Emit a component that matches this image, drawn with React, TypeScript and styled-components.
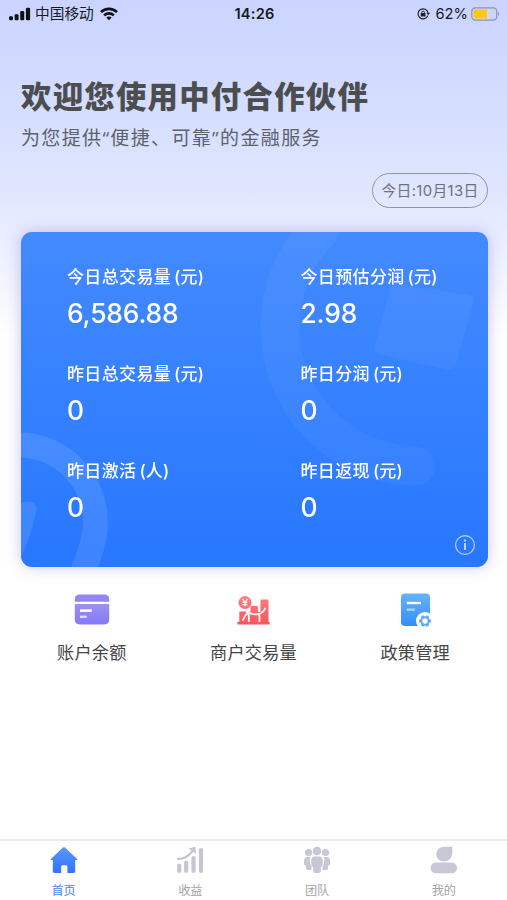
import React from 'react';
import styled, { createGlobalStyle } from 'styled-components';

const GlobalStyle = createGlobalStyle`
  * { box-sizing: border-box; }
  body { margin: 0; background: #fff; }
`;

const Screen = styled.div`
  width: 507px;
  height: 900px;
  display: flex;
  flex-direction: column;
  overflow: hidden;
  font-family: Inter, 'Noto Sans CJK SC', sans-serif;
  color: #4a4a4a;
  background: linear-gradient(180deg, #cad4ff 0, #d5deff 110px, #e0e6ff 190px, #eef1ff 260px, #fff 335px);
`;

const StatusBar = styled.header`
  height: 28px;
  display: grid;
  grid-template-columns: 1fr auto 1fr;
  align-items: center;
  padding: 0 7px 0 9px;
  color: #17191f;
  font-size: 15px;
  line-height: 28px;
`;

const StatusGroup = styled.div<{ $end?: boolean }>`
  display: flex;
  align-items: center;
  justify-content: ${(p) => (p.$end ? 'flex-end' : 'flex-start')};
`;

const Carrier = styled.span`
  margin: 0 6px 0 4px;
  font-size: 14.7px;
`;

const Clock = styled.time`
  font-weight: 600;
  font-size: 14.6px;
  letter-spacing: 0.2px;
`;

const Percent = styled.span`
  margin: 0 3px 0 6px;
  font-size: 14.7px;
`;

const Intro = styled.section`
  display: flex;
  flex-direction: column;
  padding: 46px 19px 0 21px;
`;

const Title = styled.h1`
  margin: 0;
  padding-top: 1px;
  font-size: 30.4px;
  line-height: 44px;
  letter-spacing: 1.25px;
  font-weight: 900;
  color: #4b4d4f;
  white-space: nowrap;
`;

const Subtitle = styled.p`
  margin: 5px 0 0;
  font-family: 'Open Sans', 'Noto Sans CJK SC', sans-serif;
  font-size: 19px;
  line-height: 28px;
  letter-spacing: 1.35px;
  color: #5d616c;
  white-space: nowrap;
`;

const DatePill = styled.div`
  align-self: flex-end;
  width: 116px;
  height: 35px;
  margin-top: 21px;
  border: 1px solid #92949f;
  border-radius: 18px;
  font-size: 14.8px;
  line-height: 34px;
  letter-spacing: 0.35px;
  text-align: center;
  color: #6e717b;
  white-space: nowrap;
`;

const Card = styled.section`
  position: relative;
  height: 335px;
  margin: 24px 19.5px 0 20.5px;
  padding: 32px 0 0 46.5px;
  border-radius: 11px;
  overflow: hidden;
  background: linear-gradient(180deg, #438aff, #2777ff);
  color: #fff;
`;

const CardShadow = styled.div`
  filter: drop-shadow(0 0 8px rgba(120, 95, 205, 0.36));
`;

const Pattern = styled.svg`
  position: absolute;
  inset: 0;
`;

const Stats = styled.div`
  position: relative;
  display: grid;
  grid-template-columns: 233.5px 1fr;
  grid-auto-rows: 97px;
`;

const StatLabel = styled.div`
  display: flex;
  gap: 3px;
  font-size: 17px;
  line-height: 27px;
  letter-spacing: 0.35px;
  font-weight: 500;
  white-space: nowrap;
`;

const Unit = styled.span`
  letter-spacing: 0.2px;
`;

const StatValue = styled.div`
  margin-top: 4px;
  font-size: 26.4px;
  line-height: 36px;
  font-weight: 450;
  letter-spacing: -0.15px;
`;

const InfoButton = styled.button`
  position: absolute;
  right: 12px;
  bottom: 11px;
  width: 22px;
  height: 22px;
  padding: 0;
  border: 0;
  background: none;
  svg { display: block; }
`;

const Shortcuts = styled.section`
  display: grid;
  grid-template-columns: repeat(3, 1fr);
  padding: 25px 11px 0;
`;

const Shortcut = styled.a`
  display: flex;
  flex-direction: column;
  align-items: center;
  gap: 11px;
  font-size: 17.2px;
  line-height: 28px;
  letter-spacing: 0.2px;
  color: #454545;
`;

const TabBar = styled.nav`
  height: 61px;
  margin-top: auto;
  display: grid;
  grid-template-columns: repeat(4, 1fr);
  border-top: 2px solid #ebebed;
  background: #fff;
`;

const Tab = styled.a<{ $active?: boolean }>`
  display: flex;
  flex-direction: column;
  align-items: center;
  padding: 5px 0 0 0.5px;
  gap: 8px;
  font-size: 12.2px;
  line-height: 18px;
  color: ${(p) => (p.$active ? '#4683e8' : '#a3a3a6')};
`;

const Signal = () => (
  <svg width="22" height="14" viewBox="0 0 22 14" fill="#101218">
    <rect x="0" y="9.2" width="4" height="4.1" rx="1.2" />
    <rect x="5.6" y="7.2" width="4" height="6.1" rx="1.2" />
    <rect x="11.2" y="4" width="4" height="9.3" rx="1.2" />
    <rect x="16.9" y=".7" width="4.2" height="12.6" rx="1.2" />
  </svg>
);

const Wifi = () => (
  <svg width="18" height="14" viewBox="0 0 18 14" fill="none" stroke="#101218" strokeWidth="2.6">
    <path d="M1 5.2C5.5 .7 12.5 .7 17 5.2" />
    <path d="M4.1 8.4C6.9 5.7 11.1 5.7 13.9 8.4" />
    <path d="M6.3 10.5Q9 8.3 11.7 10.5L9 13.3Z" fill="#101218" stroke="none" />
  </svg>
);

const RotationLock = () => (
  <svg width="13" height="12" viewBox="0 0 13 12" fill="none" stroke="#20232c" strokeWidth="1.2">
    <path d="M10.8 7.6A5 5 0 1 1 11 4.8" />
    <path d="M9.4 4.8H13L11.2 7.2Z" fill="#20232c" stroke="none" />
    <rect x="3.7" y="5.1" width="4.8" height="3.5" rx=".5" fill="#20232c" stroke="none" />
    <path d="M4.8 5.5V4.4a1.3 1.3 0 0 1 2.6 0V5.5" strokeWidth="1" />
  </svg>
);

const Battery = () => (
  <svg width="29" height="14" viewBox="0 0 29 14">
    <rect x=".8" y=".8" width="25" height="12.4" rx="3.6" fill="none" stroke="#8d91aa" strokeWidth="1.2" />
    <path d="M2.6 4.2Q2.6 2.5 4.3 2.5H16V11.5H4.3Q2.6 11.5 2.6 9.8Z" fill="#ffc814" />
    <path d="M27 4.8Q29 7 27 9.2Z" fill="#8d91aa" />
  </svg>
);

const CardPattern = () => (
  <Pattern width="467" height="335" viewBox="0 0 467 335" fill="none">
    <g transform="translate(-20.5 -232)">
      <path d="M319 230A139 139 0 0 0 415 466" stroke="#fff" strokeOpacity=".045" strokeWidth="39" strokeLinecap="round" />
      <path d="M396 284L468 295Q474 296 473 302L455 366Q453 371 447 370L378 354Q373 352 374 347L390 288Q391 283 396 284Z" fill="#fff" fillOpacity=".045" />
      <path d="M17 445A77 77 0 0 1 94 534Q92 549 84 566" stroke="#fff" strokeOpacity=".1" strokeWidth="25" strokeLinecap="round" />
      <path d="M17 503Q37 498 36 511Q30 537 20 559Z" fill="#fff" fillOpacity=".1" />
    </g>
  </Pattern>
);

const InfoIcon = () => (
  <svg width="22" height="22" viewBox="0 0 22 22" fill="none" stroke="#b9d2ff" strokeWidth="1.2">
    <circle cx="11" cy="11" r="9.4" />
    <path d="M11 9V16" strokeWidth="2" />
    <circle cx="11" cy="6.5" r="1.2" fill="#b9d2ff" stroke="none" />
  </svg>
);

const WalletIcon = () => (
  <svg width="36" height="36" viewBox="0 0 36 36">
    <defs>
      <linearGradient id="wallet" x1="0" y1="0" x2="0" y2="1">
        <stop stopColor="#9d91f3" />
        <stop offset="1" stopColor="#8579f8" />
      </linearGradient>
    </defs>
    <path d="M.8 9.8V7.5Q.8 2.5 5.8 2.5H30.2Q35.2 2.5 35.2 7.5V9.8Z" fill="#9288ef" />
    <path d="M.8 11.9H35.2V27.6Q35.2 32.4 30.2 32.4H5.8Q.8 32.4 .8 27.6Z" fill="url(#wallet)" />
    <path d="M6 18.6H17.8" stroke="#fff" strokeWidth="2.6" />
    <path d="M6 24.8H12.8" stroke="#ddd6ff" strokeWidth="2.4" />
  </svg>
);

const TradeIcon = () => (
  <svg width="36" height="36" viewBox="0 0 36 36">
    <defs>
      <linearGradient id="trade" gradientUnits="userSpaceOnUse" x1="0" y1="5" x2="0" y2="33">
        <stop stopColor="#ff7d80" />
        <stop offset="1" stopColor="#f6555e" />
      </linearGradient>
    </defs>
    <g fill="url(#trade)">
      <path d="M4.3 19.5H11.3V31H4.3ZM15.5 15Q15.5 14 16.5 14H21.9Q22.9 14 22.9 15V31H15.5ZM25.5 8.5Q25.5 7.5 26.5 7.5H32.5Q33.5 7.5 33.5 8.5V31H25.5Z" />
      <path d="M11 23L16 19V31H11ZM22 20H27V31H22Z" />
      <rect x="2.5" y="29.7" width="32" height="2.8" rx=".6" />
      <circle cx="10" cy="10.5" r="6.5" />
    </g>
    <path d="M7.2 6.8L10 10L12.8 6.8M7.5 10.3H12.5M7.5 12.6H12.5M10 10V14.5" stroke="#fff3f3" strokeWidth="1.2" fill="none" />
    <path d="M8 28Q10 22.5 14 20.5Q17 23 24 22Q28.5 20.5 30 16.5M13.8 21.5V29.3M24.5 22.5V29.3" stroke="#fff5f5" strokeWidth="1.8" fill="none" strokeLinejoin="round" strokeLinecap="round" />
  </svg>
);

const PolicyIcon = () => (
  <svg width="36" height="36" viewBox="0 0 36 36">
    <defs>
      <linearGradient id="policy" x1="0" y1="0" x2="0" y2="1">
        <stop stopColor="#65b4fa" />
        <stop offset="1" stopColor="#358ef5" />
      </linearGradient>
    </defs>
    <rect x="4" y="1.6" width="29" height="32.5" rx="4" fill="url(#policy)" />
    <path d="M9.8 11H24" stroke="#fff" strokeWidth="2.4" />
    <path d="M9.8 17.7H17.8" stroke="#a4d4ff" strokeWidth="2.4" />
    <circle cx="28" cy="29" r="9" fill="#fff" />
    <circle cx="28" cy="29" r="3.7" fill="none" stroke="#5daaf9" strokeWidth="2.1" />
    <g fill="#5daaf9">
      {[30, 90, 150, 210, 270, 330].map((angle) => (
        <rect key={angle} x="26.4" y="23.1" width="3.2" height="2.4" rx=".6" transform={`rotate(${angle} 28 29)`} />
      ))}
    </g>
  </svg>
);

const HomeIcon = () => (
  <svg width="28" height="28" viewBox="0 0 28 28">
    <defs>
      <linearGradient id="home" x1="0" y1="0" x2="0" y2="1">
        <stop stopColor="#5b98ff" />
        <stop offset="1" stopColor="#2f74ff" />
      </linearGradient>
    </defs>
    <path d="M13 1.4Q14 .6 15 1.4L26.7 12.5Q28 14 26 14H25.2V25.2Q25.2 27 23.4 27H17.4V20.5Q17.4 19.3 16 19.3H12.6Q11.2 19.3 11.2 20.5V27H4.6Q2.8 27 2.8 25.2V14H2Q0 14 1.3 12.5Z" fill="url(#home)" />
  </svg>
);

const IncomeIcon = () => (
  <svg width="28" height="28" viewBox="0 0 28 28" fill="none" stroke="#c5c5d3" strokeLinecap="round">
    <path d="M3.2 19.5V25M10.2 16.5V25M17.5 12V25M25 4V25" strokeWidth="4.2" />
    <path d="M1.8 12.8C9 13 12.5 10 17 4.5" strokeWidth="2.2" />
    <path d="M12.5 2.5L19.5 .8L20 7.8Z" fill="#c5c5d3" stroke="none" />
  </svg>
);

const TeamIcon = () => (
  <svg width="28" height="28" viewBox="0 0 28 28" fill="#c7c7d5">
    <circle cx="5.5" cy="6.5" r="3.6" />
    <circle cx="22.5" cy="6.5" r="3.6" />
    <path d="M7.7 11H4.5Q1 11 1 15V18Q1 19.5 3 19.8V22.5Q3 24 5 24H8.5V20Q6.8 18.5 6.8 16V13Q7 11.8 7.7 11ZM20.3 11H23.5Q27 11 27 15V18Q27 19.5 25 19.8V22.5Q25 24 23 24H19.5V20Q21.2 18.5 21.2 16V13Q21 11.8 20.3 11Z" />
    <circle cx="14" cy="5" r="4.3" />
    <path d="M12 10.5H16Q19.8 10.5 19.8 14.5V18Q19.8 20 17.8 21V25.2Q17.8 27 16 27H12Q10.2 27 10.2 25.2V21Q8.2 20 8.2 18V14.5Q8.2 10.5 12 10.5Z" />
  </svg>
);

const ProfileIcon = () => (
  <svg width="28" height="28" viewBox="0 0 28 28" fill="#c7c7d5">
    <path d="M13.5 .8H22.3V8A8 8 0 0 1 14 15.5A7.5 7.5 0 0 1 6.1 8.3A7.7 7.7 0 0 1 13.5 .8Z" />
    <rect x=".6" y="16.5" width="26.4" height="10.8" rx="5.3" />
  </svg>
);

const stats = [
  { label: '今日总交易量', unit: '(元)', value: '6,586.88' },
  { label: '今日预估分润', unit: '(元)', value: '2.98' },
  { label: '昨日总交易量', unit: '(元)', value: '0' },
  { label: '昨日分润', unit: '(元)', value: '0' },
  { label: '昨日激活', unit: '(人)', value: '0' },
  { label: '昨日返现', unit: '(元)', value: '0' },
];

const shortcuts = [
  { label: '账户余额', Icon: WalletIcon },
  { label: '商户交易量', Icon: TradeIcon },
  { label: '政策管理', Icon: PolicyIcon },
];

const tabs = [
  { label: '首页', Icon: HomeIcon },
  { label: '收益', Icon: IncomeIcon },
  { label: '团队', Icon: TeamIcon },
  { label: '我的', Icon: ProfileIcon },
];

export default function App() {
  return (
    <Screen>
      <GlobalStyle />
      <StatusBar>
        <StatusGroup>
          <Signal />
          <Carrier>中国移动</Carrier>
          <Wifi />
        </StatusGroup>
        <Clock>14:26</Clock>
        <StatusGroup $end>
          <RotationLock />
          <Percent>62%</Percent>
          <Battery />
        </StatusGroup>
      </StatusBar>
      <Intro>
        <Title>欢迎您使用中付合作伙伴</Title>
        <Subtitle>为您提供“便捷、可靠”的金融服务</Subtitle>
        <DatePill>今日:10月13日</DatePill>
      </Intro>
      <CardShadow>
        <Card>
          <CardPattern />
          <Stats>
            {stats.map((s) => (
              <div key={s.label}>
                <StatLabel>
                  <span>{s.label}</span>
                  <Unit>{s.unit}</Unit>
                </StatLabel>
                <StatValue>{s.value}</StatValue>
              </div>
            ))}
          </Stats>
          <InfoButton aria-label="说明">
            <InfoIcon />
          </InfoButton>
        </Card>
      </CardShadow>
      <Shortcuts>
        {shortcuts.map(({ label, Icon }) => (
          <Shortcut key={label}>
            <Icon />
            {label}
          </Shortcut>
        ))}
      </Shortcuts>
      <TabBar>
        {tabs.map(({ label, Icon }, i) => (
          <Tab key={label} $active={i === 0}>
            <Icon />
            {label}
          </Tab>
        ))}
      </TabBar>
    </Screen>
  );
}
